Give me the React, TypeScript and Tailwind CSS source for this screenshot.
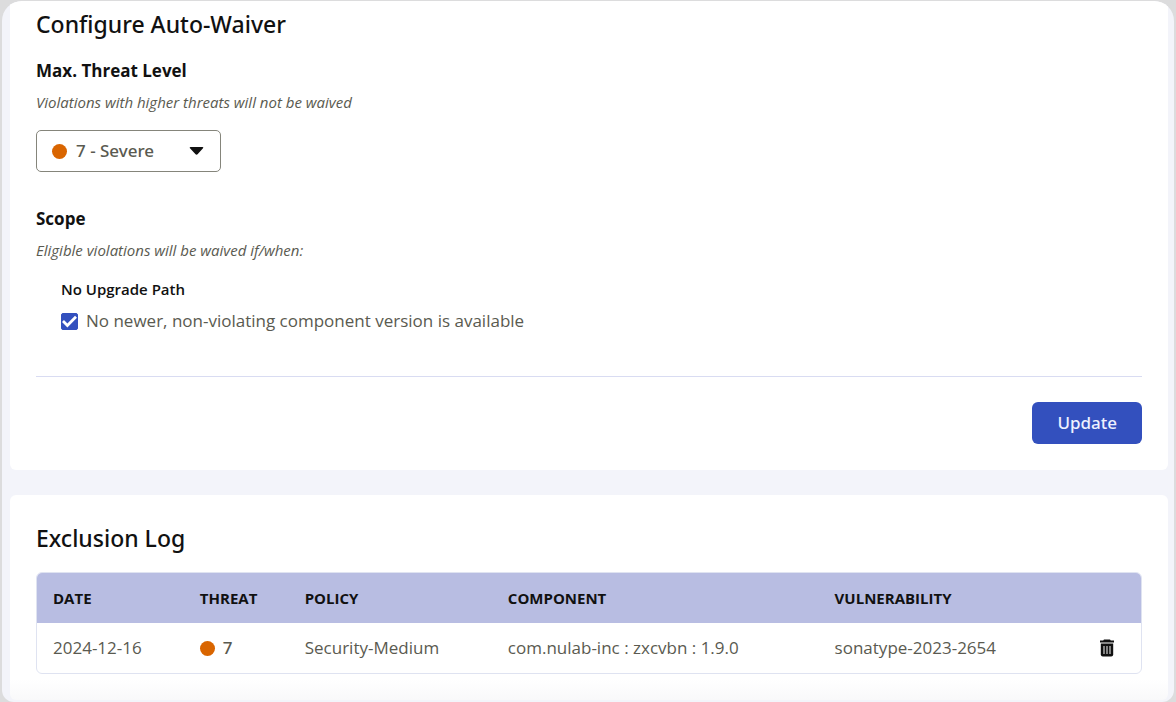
import React, { useState } from 'react';

const threatLevels = [
  { value: '10', label: '10 - Critical' },
  { value: '9', label: '9 - Critical' },
  { value: '8', label: '8 - Critical' },
  { value: '7', label: '7 - Severe' },
  { value: '6', label: '6 - Severe' },
  { value: '5', label: '5 - Severe' },
  { value: '4', label: '4 - Severe' }
];

const initialExclusions = [
  {
    date: '2024-12-16',
    threat: 7,
    policy: 'Security-Medium',
    component: 'com.nulab-inc : zxcvbn : 1.9.0',
    vulnerability: 'sonatype-2023-2654'
  }
];

const ThreatDot: React.FC = () => <span className="block size-[15px] shrink-0 rounded-full bg-[#d96500]" />;

const TrashIcon: React.FC = () => (
  <svg width="16" height="18" viewBox="0 0 16 18" aria-hidden="true">
    <path d="M5 0.5h6l0.8 1H15v2H1v-2h3.2z" fill="#111" />
    <path d="M1.8 4.6h12.4v11a2 2 0 0 1-2 2H3.8a2 2 0 0 1-2-2z" fill="#111" />
    <path d="M5 7v8M8 7v8M11 7v8" stroke="#b4b4b4" strokeWidth="1.4" fill="none" />
  </svg>
);

const AutoWaiverForm: React.FC = () => {
  const [level, setLevel] = useState('7');
  const [noUpgradePath, setNoUpgradePath] = useState(true);

  return (
    <form
      className="rounded-b-md bg-white px-[26px] pt-[3px] pb-[26px]"
      onSubmit={(e) => e.preventDefault()}
    >
      <h2 className="font-['Noto_Sans','Open_Sans',sans-serif] text-[23px] leading-10 font-medium text-[#111]">
        Configure Auto-Waiver
      </h2>

      {/* Threat level */}
      <label htmlFor="threat-level" className="mt-[13px] block text-[17px] leading-7 font-bold text-[#111]">
        Max. Threat Level
      </label>
      <p className="mt-[3px] text-[15px] leading-7 italic">Violations with higher threats will not be waived</p>
      <div className="relative mt-[14px] w-[185px]">
        <select
          id="threat-level"
          value={level}
          onChange={(e) => setLevel(e.target.value)}
          className="block h-[42px] w-full appearance-none rounded-[5px] border border-[#85857b] bg-white pr-10 pl-[39px] font-['Noto_Sans','Open_Sans',sans-serif] text-[17px] font-medium"
        >
          {threatLevels.map((item) => (
            <option key={item.value} value={item.value}>
              {item.label}
            </option>
          ))}
        </select>
        <span className="pointer-events-none absolute inset-y-0 left-4 flex items-center">
          <ThreatDot />
        </span>
        <span className="pointer-events-none absolute inset-y-0 right-4 flex items-center">
          <svg width="16" height="8" viewBox="0 0 16 8" aria-hidden="true">
            <path d="M1.6 0h11.8c0.9 0 1.2 0.7 0.6 1.3L8.8 7a1.7 1.7 0 0 1-2.5 0L1 1.3C0.4 0.7 0.7 0 1.6 0z" fill="#111" />
          </svg>
        </span>
      </div>

      {/* Scope */}
      <h3 className="mt-[33px] text-[17px] leading-7 font-bold text-[#111]">Scope</h3>
      <p className="mt-[3px] text-[15px] leading-7 italic">Eligible violations will be waived if/when:</p>
      <fieldset className="mt-[13px] pl-[25px]">
        <legend className="text-[15px] leading-6 font-semibold text-[#111]">No Upgrade Path</legend>
        <div className="mt-2 flex items-center gap-2">
          <span className="relative size-[17px]">
            <input
              id="no-upgrade-path"
              type="checkbox"
              checked={noUpgradePath}
              onChange={(e) => setNoUpgradePath(e.target.checked)}
              className="block size-full appearance-none rounded-xs border border-[#3350be] checked:bg-[#3350be]"
            />
            {noUpgradePath && (
              <svg className="pointer-events-none absolute inset-0" width="17" height="17" viewBox="0 0 17 17" aria-hidden="true">
                <path d="M2 8l4.4 4.4L15 3.8" stroke="#fff" strokeWidth="2.8" fill="none" />
              </svg>
            )}
          </span>
          <label htmlFor="no-upgrade-path" className="text-[17px] leading-6">
            No newer, non-violating component version is available
          </label>
        </div>
      </fieldset>

      <div className="mt-[43px] flex justify-end border-t border-[#d9dcf2] pt-[25px]">
        <button
          type="submit"
          className="h-[42px] rounded-md bg-[#3350be] px-[25px] font-['Noto_Sans','Open_Sans',sans-serif] text-[17px] font-medium text-[#eef1ff]"
        >
          Update
        </button>
      </div>
    </form>
  );
};

const ExclusionLog: React.FC = () => {
  const [rows, setRows] = useState(initialExclusions);

  return (
    <section className="rounded-md bg-linear-to-b from-white from-90% to-[#f9f9fa] px-[26px] pt-[23px] pb-[26px]">
      <h2 className="font-['Noto_Sans','Open_Sans',sans-serif] text-[23px] leading-10 font-medium text-[#111]">
        Exclusion Log
      </h2>
      <div className="mt-[14px] overflow-hidden rounded-md border border-[#dfe3f1]">
        <table className="w-full table-fixed text-left">
          <colgroup>
            <col className="w-[13.3%]" />
            <col className="w-[9.5%]" />
            <col className="w-[18.4%]" />
            <col className="w-[29.6%]" />
            <col />
            <col className="w-[68px]" />
          </colgroup>
          <thead className="bg-[#b8bde2] text-[15px] text-[#111]">
            <tr className="h-[50px]">
              <th className="px-4 font-bold">DATE</th>
              <th className="px-4 font-bold">THREAT</th>
              <th className="px-4 font-bold">POLICY</th>
              <th className="px-4 font-bold">COMPONENT</th>
              <th className="px-4 font-bold">VULNERABILITY</th>
              <th></th>
            </tr>
          </thead>
          <tbody className="text-[17px]">
            {rows.map((row) => (
              <tr key={row.vulnerability} className="h-[50px]">
                <td className="px-4">{row.date}</td>
                <td className="px-4">
                  <div className="flex items-center gap-2">
                    <ThreatDot />
                    <span className="font-['Noto_Sans','Open_Sans',sans-serif] font-medium">{row.threat}</span>
                  </div>
                </td>
                <td className="px-4">{row.policy}</td>
                <td className="px-4">{row.component}</td>
                <td className="px-4">{row.vulnerability}</td>
                <td>
                  <button
                    type="button"
                    aria-label="Delete exclusion"
                    className="mx-auto block"
                    onClick={() => setRows(rows.filter((r) => r !== row))}
                  >
                    <TrashIcon />
                  </button>
                </td>
              </tr>
            ))}
          </tbody>
        </table>
      </div>
    </section>
  );
};

export default function App() {
  return (
    <div className="flex min-h-screen flex-col bg-[#dcdcdd] px-[2px] pt-px font-['Open_Sans','Noto_Sans',sans-serif] text-[#5a5a50]">
      <main className="flex-1 overflow-hidden rounded-t-[20px] rounded-b-xl bg-[#f3f4fa] pr-[6px] pl-2">
        <AutoWaiverForm />
        <div className="mt-[25px]">
          <ExclusionLog />
        </div>
      </main>
    </div>
  );
}
